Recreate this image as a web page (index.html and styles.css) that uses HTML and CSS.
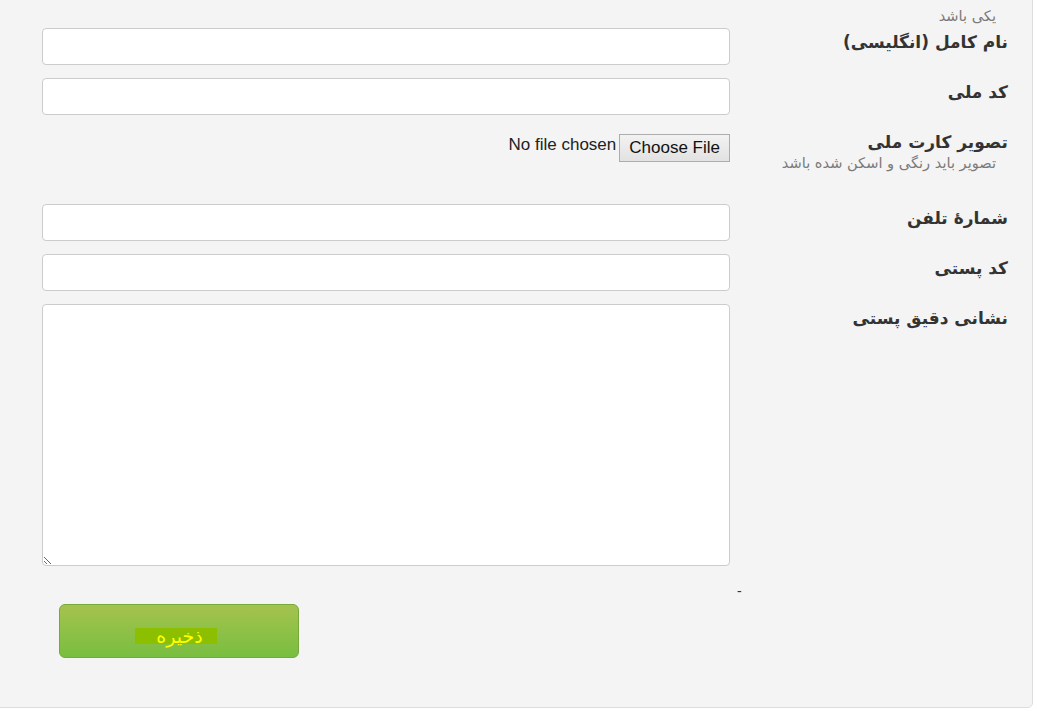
FILE: index.html
```html
<!DOCTYPE html>
<html lang="fa">
<head>
<meta charset="utf-8">
<title>فرم</title>
<link rel="stylesheet" href="styles.css">
</head>
<body>
<div class="panel">
  <form class="form">
    <div class="row row-hint">
      <div class="label-cell"><div class="help">یکی باشد</div></div>
    </div>
    <div class="row">
      <div class="label-cell"><label class="label">نام کامل (انگلیسی)</label></div>
      <div class="field-cell"><input class="text-input" type="text"></div>
    </div>
    <div class="row">
      <div class="label-cell"><label class="label">کد ملی</label></div>
      <div class="field-cell"><input class="text-input" type="text"></div>
    </div>
    <div class="row row-file">
      <div class="label-cell">
        <label class="label">تصویر کارت ملی</label>
        <div class="help">تصویر باید رنگی و اسکن شده باشد</div>
      </div>
      <div class="field-cell"><input class="file-input" type="file"></div>
    </div>
    <div class="row">
      <div class="label-cell"><label class="label">شمارهٔ تلفن</label></div>
      <div class="field-cell"><input class="text-input" type="text"></div>
    </div>
    <div class="row">
      <div class="label-cell"><label class="label">کد پستی</label></div>
      <div class="field-cell"><input class="text-input" type="text"></div>
    </div>
    <div class="row">
      <div class="label-cell"><label class="label">نشانی دقیق پستی</label></div>
      <div class="field-cell"><textarea class="textarea"></textarea></div>
    </div>
    <div class="row row-dash">
      <div class="label-cell"><span class="dash">-</span></div>
    </div>
    <div class="actions">
      <button type="button" class="save-btn"><span class="save-text">ذخیره</span></button>
    </div>
  </form>
</div>
</body>
</html>
```
FILE: styles.css
```css
html, body {
  margin: 0;
  padding: 0;
  background: #ffffff;
}
body {
  font-family: "DejaVu Sans", sans-serif;
  color: #333333;
  overflow: hidden;
}
.panel {
  margin: -10px 0 0 -10px;
  width: 1043px;
  box-sizing: border-box;
  background: #f4f4f4;
  border: 1px solid #dddddd;
  border-radius: 0 0 5px 0;
  padding: 0 24px 49px 51px;
}
.form {
  direction: rtl;
}
.row {
  display: grid;
  grid-template-columns: 263px 688px;
  column-gap: 15px;
  margin-bottom: 13px;
}
.label-cell {
  text-align: right;
}
.label {
  display: block;
  font-weight: bold;
  font-size: 17px;
  line-height: 24px;
  padding-top: 2px;
  color: #333333;
}
.help {
  font-size: 14.6px;
  line-height: 18px;
  color: #7a7a7a;
  padding-right: 12px;
}
.row-hint {
  padding-top: 16px;
  margin-bottom: 3px;
}
.row-file {
  min-height: 63px;
}
.text-input {
  display: block;
  box-sizing: border-box;
  width: 688px;
  height: 37px;
  background: #ffffff;
  border: 1px solid #cccccc;
  border-radius: 4px;
  margin: 0;
  padding: 4px 8px;
  font-size: 14px;
}
.textarea {
  display: block;
  box-sizing: border-box;
  width: 688px;
  height: 262px;
  background: #ffffff;
  border: 1px solid #cccccc;
  border-radius: 4px;
  margin: 0;
  padding: 4px 8px;
  font-size: 14px;
}
.file-input {
  display: block;
  margin-top: 6px;
  font-family: "Liberation Sans", Arial, sans-serif;
  font-size: 17px;
  color: #222222;
  line-height: 22px;
}
.file-input::file-selector-button {
  font-family: "Liberation Sans", Arial, sans-serif;
  font-size: 17px;
  height: 28px;
  padding: 0 9px;
  margin: 0 0 0 3px;
  background: linear-gradient(#f2f2f2, #e2e2e2);
  border: 1px solid #adadad;
  border-radius: 0;
  color: #111111;
  vertical-align: top;
}
.row-dash {
  margin: 16px 0 4px;
}
.dash {
  display: block;
  text-align: left;
  margin-left: -8px;
  font-size: 14px;
  line-height: 18px;
  color: #333333;
  font-family: "Liberation Sans", sans-serif;
}
.actions {
  direction: ltr;
  padding-left: 17px;
}
.save-btn {
  display: flex;
  align-items: center;
  justify-content: center;
  box-sizing: border-box;
  width: 240px;
  height: 54px;
  margin: 0;
  padding: 9px 6px 0 0;
  border: 1px solid #76a83a;
  border-radius: 6px;
  background: linear-gradient(#a5c34e, #78be40);
  cursor: pointer;
}
.save-text {
  display: inline-block;
  height: 16px;
  font-family: "DejaVu Sans", sans-serif;
  font-size: 19px;
  line-height: 16px;
  color: #ffff00;
  background: #8cbf00;
  padding: 0 14px 0 21px;
  direction: rtl;
}
```
